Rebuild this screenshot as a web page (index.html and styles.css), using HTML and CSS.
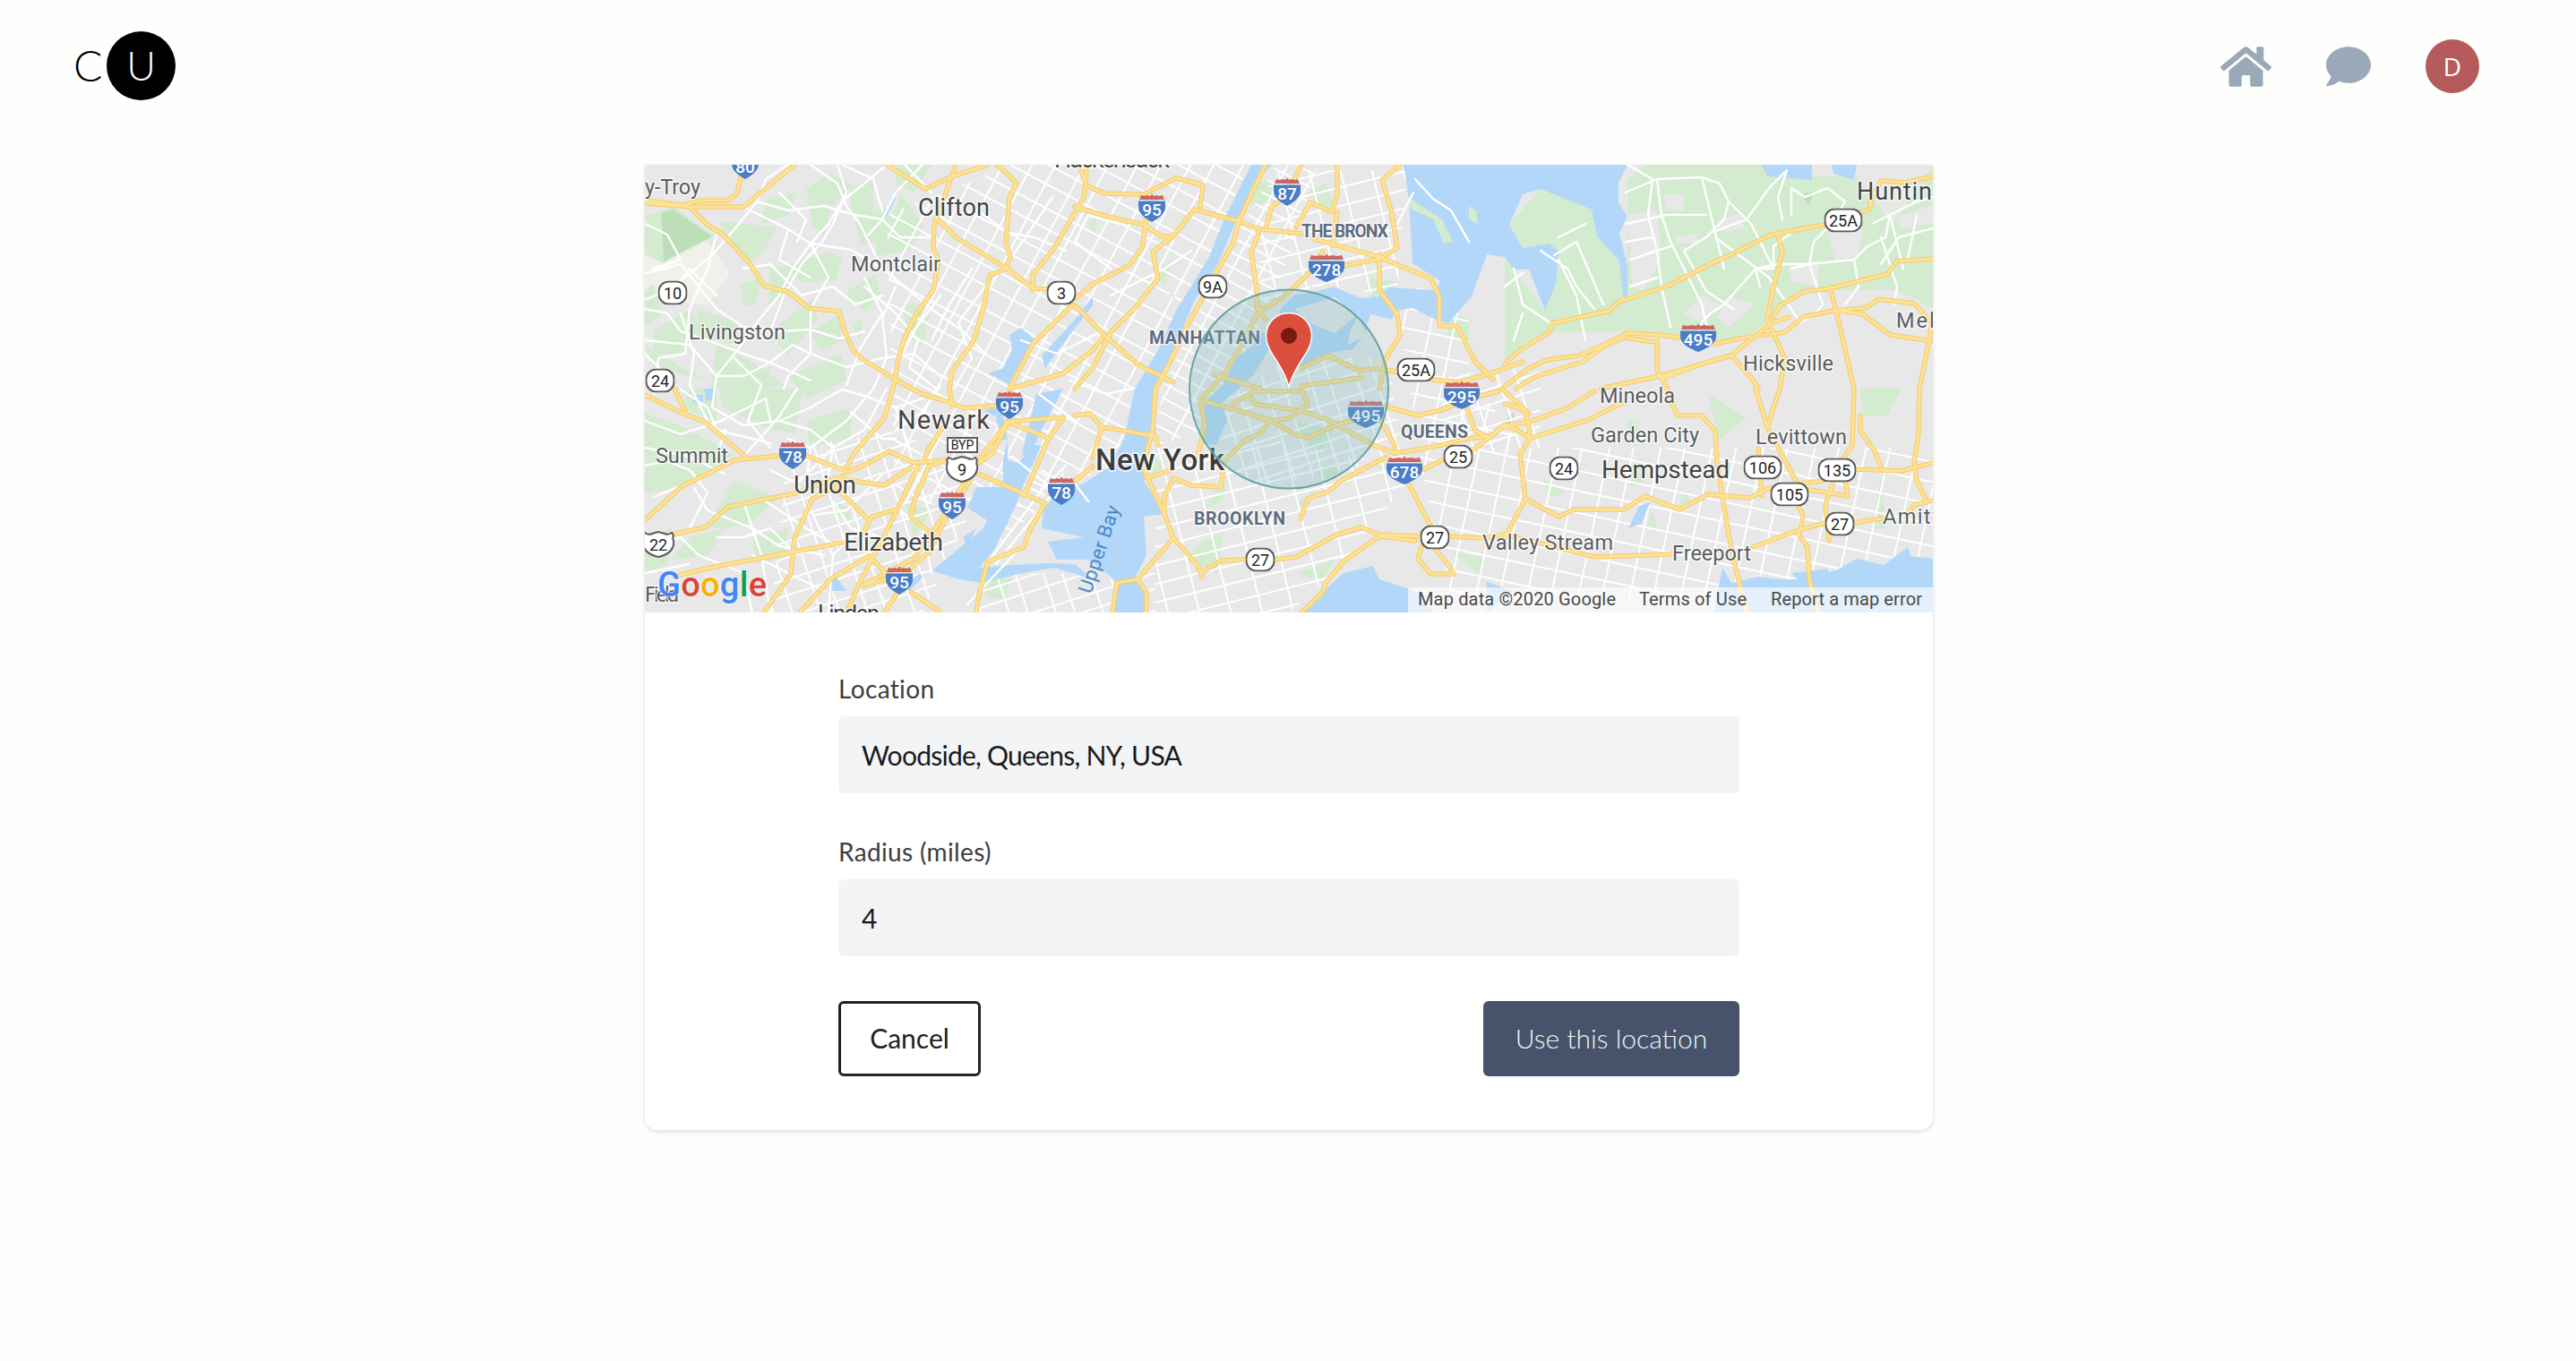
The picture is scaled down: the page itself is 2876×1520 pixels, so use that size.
FILE: index.html
```html
<!DOCTYPE html>
<html lang="en">
<head>
<meta charset="utf-8">
<title>Location</title>
<link rel="stylesheet" href="styles.css">
</head>
<body>
<header class="topbar">
  <a class="logo"><span class="logo-c">C</span><span class="logo-u">U</span></a>
  <nav class="nav">
    <svg class="nav-home" viewBox="0 0 576 512"><path d="M280.37 148.26L96 300.11V464a16 16 0 0 0 16 16l112.06-.29a16 16 0 0 0 15.92-16V368a16 16 0 0 1 16-16h64a16 16 0 0 1 16 16v95.64a16 16 0 0 0 16 16.05L464 480a16 16 0 0 0 16-16V300L295.67 148.26a12.19 12.19 0 0 0-15.3 0zM571.6 251.47L488 182.56V44.05a12 12 0 0 0-12-12h-56a12 12 0 0 0-12 12v72.61L318.47 43a48 48 0 0 0-61 0L4.34 251.47a12 12 0 0 0-1.6 16.9l25.5 31A12 12 0 0 0 45.15 301l235.22-193.74a12.19 12.19 0 0 1 15.3 0L530.9 301a12 12 0 0 0 16.9-1.6l25.5-31a12 12 0 0 0-1.7-16.93z"/></svg>
    <svg class="nav-chat" viewBox="0 0 512 512"><path d="M256 32C114.6 32 0 125.1 0 240c0 49.6 21.4 95 57 130.7C44.5 421.1 2.7 466 2.2 466.5c-2.2 2.3-2.8 5.7-1.5 8.7S4.8 480 8 480c66.3 0 116-31.8 140.6-51.4 32.7 12.3 69 19.4 107.4 19.4 141.4 0 256-93.1 256-208S397.4 32 256 32z"/></svg>
    <span class="avatar">D</span>
  </nav>
</header>

<main class="card">
  <svg class="map" viewBox="720 184 1438 500" preserveAspectRatio="none">
    <defs>
      <pattern id="p-mesh" width="52" height="44" patternUnits="userSpaceOnUse" patternTransform="rotate(28)">
        <path class="pat" d="M0 9H52M0 29H52M12 0V44M35 0V44"/>
      </pattern>
      <pattern id="p-mesh2" width="50" height="40" patternUnits="userSpaceOnUse" patternTransform="rotate(-18)">
        <path class="pat" d="M0 7H50M0 24H50M10 0V40M30 0V40"/>
      </pattern>
      <pattern id="p-sparse" width="56" height="46" patternUnits="userSpaceOnUse" patternTransform="rotate(12)">
        <path class="pat" d="M0 10H56M0 32H56M14 0V46M40 0V46"/>
      </pattern>
      <pattern id="p-man" width="15" height="30" patternUnits="userSpaceOnUse" patternTransform="rotate(-62)">
        <path class="pat" d="M0 6H15M7 0V30"/>
      </pattern>
      <pattern id="p-dense" width="34" height="20" patternUnits="userSpaceOnUse" patternTransform="rotate(-14)">
        <path class="pat" d="M0 5H34M12 0V20"/>
      </pattern>
      <path id="hw" d="M720,224L763,229L780,224L813,224L823,216L828,194L830,184M720,227L770,231L830,231L853,212L887,184M770,231L790,251L807,262L837,294L853,319L880,326L903,344L937,348L942,367L953,392L963,401L1000,424L1027,439L1053,447L1077,456L1097,454L1126,452
      M1067,184L1060,204L1043,251L1042,277L1048,291L1042,324L1023,351L1010,377L1003,401L997,434L987,467L953,507L943,527L933,544L907,557L887,601L883,641L853,684
      M990,184L1033,211L1063,197L1103,184M1113,184L1135,204L1127,221L1123,271L1128,287L1122,301L1105,307L1098,344L1087,381L1063,414L1060,434L1063,454
      M1048,246L1070,267L1123,299L1153,322L1185,324M1153,324L1153,307L1177,277L1210,221L1212,204L1213,184M1197,341L1153,384L1127,434L1127,467M1127,434L1153,427L1187,417L1220,391L1233,374
      M1200,231L1233,241L1277,251L1297,264L1310,264L1333,234L1383,247L1407,256L1453,261M1207,191L1213,207L1233,216L1277,217L1313,199L1333,204L1343,207L1340,231M1280,244L1275,277L1260,297L1220,317L1200,334M1310,264L1287,281L1293,311L1267,344L1240,371L1220,411L1200,434M1200,341L1233,374L1270,407L1310,427M1383,247L1377,271L1360,301L1327,361L1300,417L1290,434L1287,480L1277,517
      M1413,184L1397,217L1383,247M1407,256L1397,281L1403,324L1403,344L1413,357M1407,344L1387,384L1367,417L1340,447M1413,256L1420,231L1433,221L1443,204L1453,184M1447,254L1463,226L1487,237L1493,217L1493,184M1467,267L1540,287L1597,311L1607,331L1607,364L1627,364L1647,404L1667,424M1500,297L1540,289L1560,277L1553,234L1543,201L1563,184M1540,284L1540,324L1560,351L1563,374L1547,401L1540,434M1493,237L1488,274M1477,281L1460,307L1430,334L1407,347M1453,411L1483,397L1517,414L1540,411L1553,414L1600,424L1630,427L1673,414L1700,404M1357,419L1407,434M1453,431L1520,422
      M1340,447L1373,456L1417,469L1443,484L1460,489L1493,474L1520,467M1377,451L1400,437L1450,437M1397,444L1400,451L1453,459L1483,469L1533,497L1557,506M1453,434L1460,451L1440,467L1417,471L1407,484L1390,492L1367,514L1363,544L1330,542L1310,534L1300,554L1300,574L1310,601L1337,631L1342,644M1340,447L1345,474L1337,511M1200,464L1217,462L1230,477L1290,487L1293,497M1230,477L1223,501L1220,511M1200,537L1220,521M1277,524L1300,574M1280,534L1310,524M1310,601L1270,647L1280,661L1280,684M1270,647L1247,651L1242,684M1342,639L1363,626L1390,625L1423,625L1447,622L1493,597L1520,589L1540,597L1587,599M1580,604L1540,599L1500,627L1480,651L1477,661L1453,684M1452,579L1460,557L1483,549L1497,537L1527,521L1547,511M1573,541L1602,597M1587,611L1583,624L1597,641L1623,641L1617,631L1603,614M1617,599L1657,601L1680,597L1720,607L1780,622L1867,619M1547,454L1583,464L1613,457L1633,447L1673,437M1540,467L1557,497L1558,507M1560,506L1610,497L1633,491L1667,486L1680,474L1710,489L1773,469L1813,449M1590,524L1610,514L1647,501L1677,477L1707,471L1747,457L1780,437M1637,454L1647,481L1657,486M1677,434L1707,462
      M1680,407L1697,391L1730,371L1733,361L1797,347L1807,337L1863,319L1907,296L1933,284L1977,262L2037,251L2087,234L2090,221M2087,227L2100,202L2127,204L2158,197M1985,264L1990,281L1980,321L1973,357L1993,401L1987,434L1973,477L1960,434M1973,477L2005,537M1980,354L1987,341L2013,326L2043,322L2107,306L2117,292L2158,289M1913,384L1953,376L1993,371L2013,354L2047,347L2083,344L2097,334L2137,339L2157,361L2153,384L2143,434L2142,484L2137,517L2140,537L2150,557M2053,347L2080,351L2110,374L2158,381M2043,321L2050,347L2070,434L2068,497L2057,514L2063,554L2020,547M1877,377L1850,374L1817,372L1793,384L1763,397L1727,402L1707,411L1680,431M1847,382L1813,377L1790,387L1767,404L1713,421L1693,434M1850,381L1850,414L1860,431L1867,451L1873,464L1900,464L1915,481L1917,517L1930,597L1935,621L1943,657L1950,684M1787,434L1857,419L1933,397L1977,361L1997,354M1857,422L1907,404L1933,397L1957,424L1963,434
      M1680,451L1700,457L1707,471L1707,491L1697,507L1703,557L1680,601M1703,557L1740,577L1757,569L1813,569L1837,554L1875,569L1907,552L1953,556L1973,546L2033,537L2072,524L2123,526L2158,517M1957,611L2008,592L2038,584M2070,584L2100,579M2008,564L2013,577L2008,597L2018,611L2020,647L2030,684M2047,537L2038,564L2042,604M2077,464L2077,481L2093,504L2100,522M2158,559L2137,564L2128,577M1963,501L1967,554
      M720,441L763,462L787,471L833,511M753,434L767,464M720,581L760,544L820,514L870,509M900,509L947,527L970,517L993,504L1020,517L1057,514M1092,529L1167,562L1150,591L1143,611L1103,627L1093,664L1090,684M1143,554L1170,491L1187,467M1187,466L1125,471L1090,517L1053,577L1020,624L963,654M1125,471L1170,489M1125,474L1107,507L1093,517M1057,514L1037,521L1020,561L1017,577L1037,594M1033,511L1037,501L1053,477M1025,521L983,607L960,650L945,684M750,597L787,589L813,566L887,551L933,534L987,542L1017,522M760,642L793,634L940,606M933,544L970,581M963,597L973,577L1000,569M970,621L990,641L1003,661M1017,661L1050,684M1002,647L1037,617L1057,577L1083,537M963,654L990,647M893,684L927,647L970,621M987,684L1003,661"/>
      <symbol id="i2" viewBox="0 0 30 32"><path class="i-red" d="M1 7L3 2L7 3L10 2L13 3L15 .5L17 3L20 2L23 3L27 2L29 7Z"/><path class="i-blue" d="M0 8.500H30V15C30 23 22 28 15 32C8 28 0 23 0 15Z"/></symbol>
      <symbol id="i3" viewBox="0 0 40 32"><path class="i-red" d="M1 7L3 2L8 3L13 2L18 3L20 .5L22 3L27 2L32 3L37 2L39 7Z"/><path class="i-blue" d="M0 8.500H40V15C40 23 30 28 20 32C10 28 0 23 0 15Z"/></symbol>
      <symbol id="o2" viewBox="0 0 33 27"><rect class="oval" x="1" y="1" width="31" height="25" rx="11"/></symbol>
      <symbol id="o3" viewBox="0 0 43 27"><rect class="oval" x="1" y="1" width="41" height="25" rx="11"/></symbol>
      <symbol id="us" viewBox="0 0 36 30"><path class="oval" d="M3 2C6 4 9 4 11 3L18 1L25 3C27 4 30 4 33 2L35 5C34 7 34 9 35 11C36 18 32 26 18 29C4 26 0 18 1 11C2 9 2 7 1 5Z"/></symbol>
    </defs>

    <rect class="land" x="720" y="184" width="1438" height="500"/>
    <path class="beige" d="M720,275L790,270L815,305L790,340L720,335Z"/>

    <path class="green" d="M720,241L753,231L797,264L740,294L720,284ZM803,247L867,254L853,281L837,294L813,271ZM877,297L927,281L940,287L933,314L893,314ZM947,324L977,307L983,327L967,347L947,337ZM900,211L927,194L953,207L927,231L920,264L907,251ZM980,267L1007,217L1030,251L1020,277L977,287ZM827,317L850,311L843,341L830,341ZM720,324L730,317L740,351L720,364ZM777,344L827,361L820,384L783,377ZM860,371L907,334L913,357L880,397ZM800,384L840,404L877,431L793,434ZM903,371L937,351L940,381L917,391ZM950,361L963,357L960,381ZM720,387L750,404L787,424L730,411ZM720,461L763,477L820,507L760,544L720,551ZM803,434L897,434L887,484L853,477L807,454ZM820,537L870,557L833,587L787,591ZM927,557L947,567L953,584L937,577ZM855,224L890,215L880,240L850,250ZM1003,184L1040,184L1020,215L1000,205ZM955,245L990,232L1000,262L960,275ZM1010,340L1040,340L1030,385L1010,375ZM770,600L810,590L790,620L750,625ZM1010,560L1040,570L1020,600ZM825,420L860,410L860,434L830,434ZM1100,640L1130,645L1120,670L1100,665ZM860,300L885,295L880,330L858,340ZM730,370L770,345L785,370L760,395L730,395ZM880,420L940,395L945,425L900,445ZM770,434L800,434L800,470L760,455ZM900,470L950,455L950,490L905,500ZM720,600L750,590L745,630L720,640ZM840,600L880,590L875,625L845,630ZM950,210L975,200L975,240L950,240Z"/>
    <path class="green" d="M1817,200L1840,184L1973,184L1997,197L2073,197L2113,251L2158,184L2158,344L2117,324L2013,324L1980,354L1953,374L1913,384L1880,374L1813,371L1730,371L1697,391L1680,410L1680,287L1690,301L1725,347L1740,281L1700,277L1685,251L1720,211L1777,234L1808,291L1817,331ZM1908,440L1950,467L1920,490L1913,467ZM1723,534L1747,550L1730,555ZM1820,520L1835,512L1833,540L1820,545ZM2077,434L2123,434L2107,464L2080,464ZM2100,530L2105,590L2090,590ZM1815,470L1830,470L1825,500ZM1880,550L1890,560L1875,565ZM1845,570L1850,590L1838,590ZM1400,205L1420,200L1420,225L1395,230ZM1460,215L1480,205L1490,235L1475,235ZM1530,310L1560,315L1550,345L1530,335ZM1620,350L1640,355L1640,385L1615,375ZM1680,355L1700,340L1690,370ZM1445,470L1490,480L1470,510ZM1470,525L1490,520L1495,530L1475,535ZM1535,520L1580,525L1560,535ZM1450,560L1470,545L1455,575ZM1335,610L1365,595L1360,640L1325,625ZM1370,535L1365,560L1340,570ZM1290,510L1300,520L1285,535ZM1290,300L1310,290L1300,320ZM1215,250L1225,240L1222,265ZM1620,615L1660,625L1650,640ZM1450,640L1490,625L1475,650Z"/>
    <path class="green2" d="M738,238L752,234L795,264L741,292ZM2010,217L2025,214L2020,230ZM1680,470L1690,460L1690,480Z"/>
    <path class="gray-hole" d="M1817,240L1850,235L1855,290L1835,325L1822,320ZM1857,217L1880,217L1880,235L1860,235ZM1870,265L1895,260L1895,272L1870,272ZM1900,330L1920,340L1900,360L1880,350ZM1930,330L1960,340L1930,365L1917,355ZM1917,247L1945,237L1947,255L1920,260ZM1997,300L2030,290L2030,320L2000,315ZM2040,260L2080,255L2075,285L2050,295ZM2120,240L2158,230L2158,250L2120,255Z"/>

    <path class="p-a" d="M990,240L1130,184L1395,184L1300,400L1240,520L1130,570L1000,560Z"/>
    <path class="p-b" d="M880,500L1010,480L1090,560L1030,684L860,684Z"/>
    <path class="p-c" d="M1560,330L1640,300L1640,420L1700,500L2158,500L2158,670L1620,670L1590,540Z"/>
    <path class="p-d" d="M1425,184L1360,300L1300,430L1285,500L1345,480L1400,375L1445,275L1470,184Z"/>
    <path class="p-e" d="M1290,490L1345,510L1420,490L1560,520L1570,540L1500,630L1440,684L1290,684Z"/>
    <path class="p-e" d="M1420,190L1570,190L1560,330L1465,320L1410,350L1405,260Z"/>
    <path class="p-f" d="M1360,450L1440,400L1550,400L1565,510L1410,545L1350,510Z"/>
    <path class="p-b" d="M1097,640L1290,640L1290,684L1090,684Z"/>
    <path class="p-d" d="M1095,625L1170,560L1190,530L1170,515L1110,600Z"/>
    <path class="p-f" d="M1610,420L1720,410L1720,500L1610,510Z"/>

    <path class="water" d="M1397,184L1367,244L1350,287L1313,347L1293,391L1267,434L1255,490L1240,520L1210,540L1180,548L1165,570L1163,590L1210,600L1170,605L1180,625L1215,625L1235,640L1248,652L1242,684L1282,684L1282,661L1267,646L1280,620L1277,577L1300,574L1277,537L1277,517L1290,484L1290,434L1313,384L1333,337L1360,294L1380,247L1400,204L1420,184Z"/>
    <path class="water" d="M1125,491L1125,514L1137,517L1153,497L1163,497L1143,541L1133,567L1110,614L1093,634L1130,631L1170,629L1200,630L1220,647L1177,634L1137,641L1097,651L1070,647L1040,637L1053,627L1097,591L1102,581L1080,567L1090,544L1120,544L1120,514Z"/>
    <path class="water" d="M1103,417L1120,411L1130,391L1127,374L1140,366L1157,381L1137,411L1130,431ZM1163,397L1200,357L1220,331L1220,341L1187,384L1167,411ZM1097,459L1113,454L1120,464L1125,491L1117,491L1112,465ZM1157,440L1187,434L1168,470L1153,501L1140,510L1150,470ZM1010,654L1027,640L1030,645L1015,660ZM773,441L785,441L785,450L773,450ZM786,434L797,434L797,447L788,447ZM988,240L996,220L1000,222L990,242ZM1075,600L1090,590L1080,610ZM930,640L945,660L925,660Z"/>
    <path class="water" d="M1567,184L1817,184L1807,204L1807,227L1817,241L1808,261L1817,297L1817,331L1812,331L1808,291L1783,264L1777,234L1720,211L1700,217L1685,251L1700,277L1730,272L1740,281L1737,316L1725,347L1707,301L1690,301L1680,287L1660,284L1643,331L1617,361L1603,357L1577,344L1560,347L1553,357L1530,351L1523,375L1510,390L1480,395L1455,410L1440,400L1423,370L1430,345L1445,330L1470,325L1490,320L1500,325L1520,333L1540,331L1550,321L1603,324L1608,314L1577,294L1573,221Z"/>
    <path class="water" d="M1410,370L1400,385L1380,400L1365,430L1345,450L1343,495L1358,497L1370,470L1365,450L1400,418L1423,380Z"/>
    <path class="water" d="M1967,184L2023,184L2023,201L1973,197ZM2045,184L2073,184L2070,201L2047,194ZM1923,634L1933,651L1963,644L1987,647L2013,647L2033,641L2050,637L2073,624L2103,631L2130,611L2133,621L2158,624L2158,684L1913,684ZM1453,684L1477,661L1500,640L1533,632L1540,647L1580,660L1600,684ZM1660,650L1690,660L1660,684ZM2000,640L2040,635L2050,655L2020,660ZM1843,560L1832,585L1818,590L1830,565Z"/>
    <path class="land-on" d="M1445,345L1490,332L1515,352L1490,372L1465,362ZM1508,368L1517,352L1525,375L1505,385ZM1305,330L1310,325L1312,335Z"/>
    <path class="green" d="M1573,221L1610,245L1622,270L1612,272L1600,245L1573,232ZM1640,230L1648,235L1650,250L1640,245Z"/>

    <path class="road" d="M830,231L880,256L905,272L950,279L985,300L1010,320L1040,345L1075,370L1100,395M990,184L965,205L940,225L925,250L905,272L885,300L870,330L845,360L828,385L800,420M880,184L855,200L845,225L825,250L795,285L765,310M905,184L935,205L945,230L960,250L985,300M1030,184L1000,215L985,245L970,262M720,305L760,295L780,320L800,345L830,365L870,370L905,368L937,378L965,370M720,345L745,350L760,370L790,380L830,395L860,405L905,425M720,380L770,385L800,420L795,455L830,475L870,470L905,455L940,435L975,445M760,350L775,395L770,430L790,470M935,184L945,215L930,250L918,270L895,295L875,330L860,370M905,272L925,310L905,345L905,395L880,420L875,434M965,320L1000,350L1025,380L1015,410L1045,434M965,310L985,350L960,390L945,430M1000,320L985,355L990,400L975,434M1050,330L1020,370L1005,400M1085,300L1060,340L1040,380M1100,320L1070,360L1085,400L1065,434M985,245L1005,265L1045,265M1085,230L1125,260L1155,265L1190,280M1175,220L1145,265L1120,300M1010,184L1040,215M720,395L745,420M720,470L760,485L805,470L855,445L860,470M760,435L790,455L800,480L860,495M720,500L770,510L810,530M730,555L790,530L830,510L870,465L890,434M880,490L905,500L945,470L975,434M905,500L900,540M860,525L890,540L930,500L965,480L990,434M775,545L790,570L840,590L870,610L920,620M720,610L760,600L780,620L830,640L840,684M830,560L850,620L860,684M910,575L945,570L985,530M960,590L930,620L925,684M905,570L930,620M1000,480L1030,460L1050,430M960,440L1000,455L1030,445"/>
    <path class="road" d="M720,250L745,262L760,290L730,300M720,335L755,320L770,300L800,330M800,262L790,300L770,345L765,395M870,215L900,245L890,270M880,256L870,290L905,310M845,225L880,235L920,230L955,240L985,245M940,184L975,200L985,235M830,300L860,295L895,330L930,320L955,340L985,330M905,395L945,410L985,400L1020,395L1050,420M860,405L885,385L905,395M820,400L850,430L835,470L860,500M765,395L735,400L730,440M800,420L830,420L860,405M720,520L745,515L770,525L790,550L770,590M810,480L800,510M870,470L905,480L930,500L925,530M950,460L985,490L1000,490M1000,455L1015,500M855,560L900,590L935,610M800,600L830,600L860,590L880,610M720,640L770,630M840,620L880,640L920,660M930,560L950,590L985,600M1005,570L1030,590L1040,640"/>
    <path class="road" d="M1150,600L1080,675M1105,625L1165,545L1190,520M1112,630L1172,555M1215,560L1200,540M1140,380L1180,395L1230,370M1240,300L1200,270L1215,240L1250,250M1240,330L1300,300L1330,280M1195,425L1235,440L1265,434M1160,440L1200,470M1130,510L1180,550"/>
    <path class="road" d="M1720,280L1750,300L1760,320L1780,345M1690,300L1700,340L1730,360M1735,285L1760,270L1790,340M1770,250L1740,265M1815,215L1850,200L1900,198L1920,205L1930,225L1925,245L1905,265L1880,280M1850,200L1855,240L1865,270L1885,310L1900,340L1905,362M1815,250L1860,240L1905,240M1820,290L1865,275M1815,270L1845,265M1820,320L1850,310M1817,184L1845,200L1840,240L1850,280L1855,320L1865,365M1900,198L1915,260L1925,300M1880,280L1905,325L1935,345M1910,260L1950,245L1975,210L1995,190M1930,225L1955,250L1980,300L1960,300L1925,340L1910,350L1900,360L1890,390M1915,265L1975,310L2010,360L2030,350M1980,300L1980,275L2000,260M1995,190L1985,220L1990,245M2000,240L2000,210L2015,220L2040,210L2060,225L2045,250L2025,270L2020,295L2000,300M2020,295L1985,295L1960,300L1965,320M2020,295L2070,290L2085,275L2105,265L2110,240L2140,225L2158,220M2070,290L2075,320L2060,340M2100,265L2118,320L2115,340M2090,250L2110,240L2125,300M2020,295L2035,340L2025,352M2158,255L2120,265L2100,295M2140,240L2130,290"/>
    <path class="road" d="M1680,320L1700,305M1700,350L1690,380M1740,290L1760,330L1770,380"/>
    <path class="road" d="M1580,200L1600,222L1620,235L1640,270M1578,215L1560,250"/>

    <use href="#hw" class="hw-case"/>
    <use href="#hw" class="hw-fill"/>

    <g class="label">
      <text class="t24" x="720" y="217" textLength="62">y-Troy</text>
      <text class="t27" x="1025" y="241" textLength="80">Clifton</text>
      <text class="t24" x="950" y="303" textLength="100">Montclair</text>
      <text class="t24" x="769" y="379" textLength="108">Livingston</text>
      <text class="t27" x="1177" y="187" textLength="129">Hackensack</text>
      <text class="t30" x="1002" y="479" textLength="103">Newark</text>
      <text class="t24" x="732" y="517" textLength="81">Summit</text>
      <text class="t28" x="886" y="551" textLength="70">Union</text>
      <text class="t28" x="942" y="615" textLength="111">Elizabeth</text>
      <text class="t26" x="913" y="694" textLength="69">Linden</text>
      <text class="t24" x="720" y="672" textLength="38">Field</text>
      <text class="t34" x="1223" y="525" textLength="144">New York</text>
      <text class="caps" x="1283" y="384" textLength="124">MANHATTAN</text>
      <text class="caps" x="1453" y="265" textLength="97">THE BRONX</text>
      <text class="caps" x="1564" y="489" textLength="75">QUEENS</text>
      <text class="caps" x="1333" y="586" textLength="102">BROOKLYN</text>
      <text class="bay" transform="translate(1218 664) rotate(-71.500)" textLength="102">Upper Bay</text>
      <text class="t24" x="1946" y="414" textLength="101">Hicksville</text>
      <text class="t24" x="1786" y="450" textLength="84">Mineola</text>
      <text class="t24" x="1776" y="494" textLength="121">Garden City</text>
      <text class="t24" x="1960" y="496" textLength="102">Levittown</text>
      <text class="t28" x="1788" y="534" textLength="143">Hempstead</text>
      <text class="t24" x="1655" y="614" textLength="146">Valley Stream</text>
      <text class="t24" x="1867" y="626" textLength="88">Freeport</text>
      <text class="t24" x="2102" y="585" textLength="66">Amity</text>
      <text class="t24" x="2117" y="366" textLength="56">Melv</text>
      <text class="t27" x="2073" y="223" textLength="100">Hunting</text>
    </g>

    <use href="#i2" x="817" y="168" width="30" height="32"/><text class="sh" x="832" y="193">80</text>
    <use href="#i2" x="1271" y="216" width="30" height="32"/><text class="sh" x="1286" y="241">95</text>
    <use href="#i2" x="1422" y="198" width="30" height="32"/><text class="sh" x="1437" y="223">87</text>
    <use href="#i3" x="1461" y="283" width="40" height="32"/><text class="sh" x="1481" y="308">278</text>
    <use href="#i3" x="1876" y="361" width="40" height="32"/><text class="sh" x="1896" y="386">495</text>
    <use href="#i3" x="1612" y="425" width="40" height="32"/><text class="sh" x="1632" y="450">295</text>
    <use href="#i3" x="1505" y="446" width="40" height="32"/><text class="sh" x="1525" y="471">495</text>
    <use href="#i3" x="1548" y="509" width="40" height="32"/><text class="sh" x="1568" y="534">678</text>
    <use href="#i2" x="1112" y="436" width="30" height="32"/><text class="sh" x="1127" y="461">95</text>
    <use href="#i2" x="870" y="492" width="30" height="32"/><text class="sh" x="885" y="517">78</text>
    <use href="#i2" x="1048" y="548" width="30" height="32"/><text class="sh" x="1063" y="573">95</text>
    <use href="#i2" x="1170" y="532" width="30" height="32"/><text class="sh" x="1185" y="557">78</text>
    <use href="#i2" x="989" y="632" width="30" height="32"/><text class="sh" x="1004" y="657">95</text>

    <use href="#o2" x="734.500" y="313.500" width="33" height="27"/><text class="ov" x="751" y="333.500">10</text>
    <use href="#o2" x="1168.500" y="313.500" width="33" height="27"/><text class="ov" x="1185" y="333.500">3</text>
    <use href="#o2" x="720.500" y="411.500" width="33" height="27"/><text class="ov" x="737" y="431.500">24</text>
    <use href="#o2" x="1337.500" y="306.500" width="33" height="27"/><text class="ov" x="1354" y="326.500">9A</text>
    <use href="#o3" x="1559.500" y="399.500" width="43" height="27"/><text class="ov" x="1581" y="419.500">25A</text>
    <use href="#o3" x="2036.500" y="232.500" width="43" height="27"/><text class="ov" x="2058" y="252.500">25A</text>
    <use href="#o2" x="1611.500" y="496.500" width="33" height="27"/><text class="ov" x="1628" y="516.500">25</text>
    <use href="#o2" x="1729.500" y="509.500" width="33" height="27"/><text class="ov" x="1746" y="529.500">24</text>
    <use href="#o3" x="1946.500" y="508.500" width="43" height="27"/><text class="ov" x="1968" y="528.500">106</text>
    <use href="#o3" x="2029.500" y="511.500" width="43" height="27"/><text class="ov" x="2051" y="531.500">135</text>
    <use href="#o3" x="1976.500" y="538.500" width="43" height="27"/><text class="ov" x="1998" y="558.500">105</text>
    <use href="#o2" x="2037.500" y="571.500" width="33" height="27"/><text class="ov" x="2054" y="591.500">27</text>
    <use href="#o2" x="1390.500" y="611.500" width="33" height="27"/><text class="ov" x="1407" y="631.500">27</text>
    <use href="#o2" x="1585.500" y="586.500" width="33" height="27"/><text class="ov" x="1602" y="606.500">27</text>

    <rect class="oval" x="1058" y="489" width="33" height="16"/><text class="byp" x="1074.500" y="502">BYP</text>
    <use href="#us" x="1056" y="509" width="36" height="30"/><text class="ov" x="1074" y="531">9</text>
    <use href="#us" x="717" y="593" width="36" height="30"/><text class="ov" x="735" y="615">22</text>

    <circle class="radius" cx="1439" cy="434.500" r="111"/>
    <path class="pin" d="M1439 349.500C1424.500 349.500 1413.500 361 1413.500 375C1413.500 394 1432 405 1439 432C1446 405 1464.500 394 1464.500 375C1464.500 361 1453.500 349.500 1439 349.500Z"/>
    <circle class="pin-dot" cx="1439" cy="375" r="9"/>

    <text class="google" x="734" y="666" textLength="122"><tspan class="g-b">G</tspan><tspan class="g-r">o</tspan><tspan class="g-y">o</tspan><tspan class="g-b">g</tspan><tspan class="g-g">l</tspan><tspan class="g-r">e</tspan></text>

    <rect class="attr" x="1572" y="656" width="586" height="28"/>
    <text class="attr-t" x="1583" y="676" textLength="221">Map data ©2020 Google</text>
    <text class="attr-t" x="1830" y="676" textLength="120">Terms of Use</text>
    <text class="attr-t" x="1977" y="676" textLength="169">Report a map error</text>
  </svg>

  <form class="form">
    <label class="field-label" for="loc">Location</label>
    <input class="field-input" id="loc" type="text" value="Woodside, Queens, NY, USA">
    <label class="field-label" for="rad">Radius (miles)</label>
    <input class="field-input" id="rad" type="text" value="4">
    <div class="actions">
      <button class="btn btn-cancel" type="button">Cancel</button>
      <button class="btn btn-use" type="button">Use this location</button>
    </div>
  </form>
</main>
</body>
</html>
```

FILE: styles.css
```css
* { box-sizing: border-box; }
html, body { margin: 0; height: 100%; }
body {
  background: #fefefc;
  font-family: "Lato", "Liberation Sans", sans-serif;
  color: #222;
  overflow: hidden;
  padding-left: 2px;
}

.topbar {
  height: 148px;
  display: flex;
  align-items: center;
  justify-content: space-between;
  padding: 0 108px 0 80px;
}
.logo { display: flex; align-items: center; color: #000; margin-top: -2px; }
.logo-c { font-size: 48px; font-weight: 300; width: 37px; line-height: 1; }
.logo-u {
  width: 77px; height: 77px; border-radius: 50%;
  background: #000; color: #fff;
  display: flex; align-items: center; justify-content: center;
  font-size: 45px; font-weight: 300; line-height: 1;
}
.nav { display: flex; align-items: center; gap: 61px; }
.nav-home { width: 57px; height: 51px; fill: #9aa8b7; display: block; }
.nav-chat { width: 50px; height: 50px; fill: #9aa8b7; display: block; }
.avatar {
  width: 60px; height: 60px; border-radius: 50%;
  background: #b55b5b; color: #fff;
  display: flex; align-items: center; justify-content: center;
  font-family: "Open Sans", sans-serif; font-size: 28px;
}

.card {
  width: 1438px;
  margin: 36px auto 0;
  background: #fff;
  border-radius: 0 0 14px 14px;
  box-shadow: 0 2px 5px rgba(0, 0, 0, .13);
}
.map { display: block; width: 1438px; height: 500px; }

.form {
  width: 1006px;
  margin: 0 auto;
  padding: 68px 0 60px;
  display: flex;
  flex-direction: column;
}
.field-label {
  height: 36px;
  line-height: 34px;
  font-size: 28px;
  font-weight: 400;
  letter-spacing: .35px;
  color: #3d3d3d;
  margin-bottom: 12px;
}
.field-input {
  height: 86px;
  border: 0;
  outline: 0;
  border-radius: 6px;
  background: #f3f4f6;
  padding: 0 27px 0 26px;
  margin-bottom: 48px;
  font-family: inherit;
  font-size: 30px;
  letter-spacing: -.75px;
  color: #1a1a1a;
}
.field-input:last-of-type { margin-bottom: 50px; }
.actions { display: flex; justify-content: space-between; }
.btn {
  height: 84px;
  border-radius: 6px;
  font-family: inherit;
  font-size: 30px;
  font-weight: 400;
  padding: 0 0 2px;
}
.btn-cancel { width: 159px; background: #fff; border: 3px solid #222; color: #222; }
.btn-use { width: 286px; background: #46536a; border: 0; color: #f3f3f3; font-weight: 300; }

/* map */
.land { fill: #e8e8e8; }
.beige { fill: #f1f1ec; }
.green { fill: #d3ebcf; }
.green2 { fill: #bcdfb7; }
.gray-hole { fill: #e8e8e8; }
.water { fill: #b3d7f9; }
.land-on { fill: #e8e8e8; }
.pat { stroke: #fff; stroke-width: 2; fill: none; }
.p-a { fill: url(#p-mesh); }
.p-b { fill: url(#p-mesh2); }
.p-c { fill: url(#p-sparse); }
.p-d { fill: url(#p-man); }
.p-e { fill: url(#p-dense); }
.p-f { fill: url(#p-mesh2); }
.road { fill: none; stroke: #fff; stroke-width: 2.4; stroke-linejoin: round; stroke-linecap: round; }
.hw-case { fill: none; stroke: #f5cf78; stroke-width: 5.500; stroke-linejoin: round; stroke-linecap: round; }
.hw-fill { fill: none; stroke: #fde293; stroke-width: 3; stroke-linejoin: round; stroke-linecap: round; }

.label text {
  font-family: "Roboto", sans-serif;
  fill: #5a5d61;
  stroke: #fff;
  stroke-opacity: .7;
  stroke-width: 3px;
  paint-order: stroke;
  stroke-linejoin: round;
}
.label .t24 { font-size: 23.500px; }
.label .t26 { font-size: 26px; fill: #444; }
.label .t27 { font-size: 27px; fill: #444; }
.label .t28 { font-size: 28px; fill: #444; }
.label .t30 { font-size: 29px; fill: #444; }
.label .t34 { font-size: 33px; font-weight: 500; fill: #3c3c3c; stroke-width: 4px; }
.label .caps { font-size: 19.500px; font-weight: 700; fill: #5f6b7e; }
.label .bay { font-size: 22px; fill: #4c88c8; stroke: none; }

.i-red { fill: #cc6662; }
.i-blue { fill: #4a7cc7; }
.sh {
  font-family: "Roboto", sans-serif;
  font-size: 19px; font-weight: 500;
  fill: #fff; text-anchor: middle;
}
.oval { fill: #fff; stroke: #5c5c5c; stroke-width: 2; }
.ov {
  font-family: "Roboto", sans-serif;
  font-size: 18px; fill: #222; text-anchor: middle;
}
.byp {
  font-family: "Roboto", sans-serif;
  font-size: 14px; fill: #222; text-anchor: middle;
}
.radius { fill: rgba(125, 185, 192, .3); stroke: #6aa5a5; stroke-width: 2; }
.pin { fill: #db4f3d; stroke: #fff; stroke-width: 1.500; }
.pin-dot { fill: #771a10; }

.google {
  font-family: "Roboto", sans-serif;
  font-size: 38px; font-weight: 500;
  stroke: #fff; stroke-opacity: .5; stroke-width: 2px; paint-order: stroke;
}
.g-b { fill: #4285f4; }
.g-r { fill: #db4437; }
.g-y { fill: #f4b400; }
.g-g { fill: #0f9d58; }
.attr { fill: rgba(255, 255, 255, .65); }
.attr-t { font-family: "Roboto", sans-serif; font-size: 20px; fill: #4a4a4a; }
```
